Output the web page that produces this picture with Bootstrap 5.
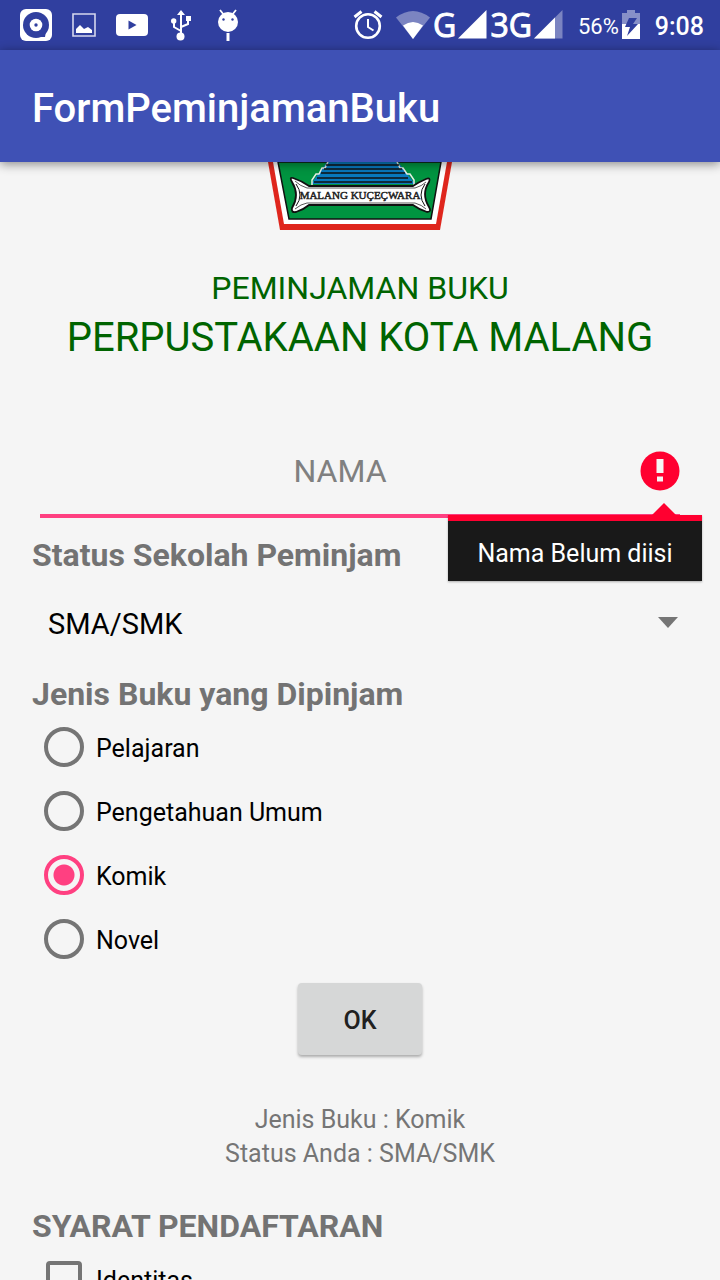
<!DOCTYPE html>
<html lang="id">
<head>
<meta charset="utf-8">
<meta name="viewport" content="width=device-width, initial-scale=1">
<title>FormPeminjamanBuku</title>
<link href="https://cdn.jsdelivr.net/npm/bootstrap@5.3.0/dist/css/bootstrap.min.css" rel="stylesheet">
<style>
  body { font-family: Roboto, "Noto Sans", sans-serif; font-size: 25px; line-height: 34px; background: #f5f5f5; color: #000; }
  .status-bar { height: 50px; background: #303f9f; color: #fff; }
  .status-bar svg { display: block; flex: none; }
  .app-bar { height: 112px; background: #3f51b5; box-shadow: 0 2px 10px rgba(0,0,0,.45); z-index: 2; }
  .app-title { font-size: 40px; line-height: 48px; font-weight: 500; color: #fff; padding-top: 6px; }
  .network { font: 32px/40px "Open Sans", "Noto Sans", sans-serif; padding-left: 2px; -webkit-text-stroke: 1px #fff; }
  .percent { font-size: 22px; margin-left: 14px; }
  .clock { font-weight: 500; }
  .green { color: #006400; margin-top: 36px; }
  .subtitle { font-size: 32px; line-height: 44px; }
  .headline { font-size: 40px; line-height: 56px; }
  .section-title { font-size: 32px; line-height: 41px; font-weight: 700; color: #737373; }
  .name-field { margin: 62px 8px 17px; }
  .name-input, .name-input:focus { height: 90px; padding: 0 40px 0 0; font-size: 32px; text-align: center; background: transparent; border: 0; border-bottom: 4px solid #ff4081; border-radius: 0; box-shadow: none; }
  .name-input::placeholder { color: #808080; }
  .error-icon { right: 0; top: 23px; }
  .error-tip { right: -22px; top: 87px; width: 254px; height: 66px; color: #fff; background: #191919; border-top: 6px solid #ff0030; box-shadow: 0 1px 2px rgba(0,0,0,.3); z-index: 1; }
  .error-tip span { padding-top: 6px; }
  .error-tip::before { content: ""; position: absolute; right: 26px; top: -18px; border: solid transparent; border-width: 0 12px 12px; border-bottom-color: #ff0030; }
  .spinner { height: 98px; }
  .spinner .form-select { height: 96px; padding: 0 48px 0 16px; font-size: 29px; line-height: 40px; color: #000; border: 0; background: transparent; box-shadow: none; }
  .spinner svg { right: 10px; top: 41px; pointer-events: none; }
  .choices { margin-top: -1px; }
  .choice { height: 64px; padding: 0 12px; margin: 0; gap: 12px; }
  .choice .form-check-input { float: none; flex: none; width: 40px; height: 40px; margin: 0; border: 4px solid #757575; background: transparent; box-shadow: none; }
  .choice .form-check-input:checked { border-color: #ff4081; background: radial-gradient(circle, #ff4081 10px, transparent 11px); }
  .choice .form-check-input[type=checkbox] { width: 36px; height: 36px; margin: 0 2px; border-radius: 4px; }
  .choice label { padding-top: 4px; }
  .ok-btn { width: 124px; height: 72px; margin: 12px 0 48px; padding: 4px 0 0; font-size: 25px; font-weight: 500; color: #202020; background: #d6d7d7; border: 0; border-radius: 4px; box-shadow: 0 2px 3px rgba(0,0,0,.3); }
  .result { color: #757575; margin-bottom: 35px; }
</style>
</head>
<body class="d-flex flex-column vh-100 overflow-hidden">

<header class="status-bar d-flex align-items-center justify-content-between flex-shrink-0 pe-3">
  <div class="d-flex align-items-center">
    <svg width="250" height="50" viewBox="0 0 250 50" fill="#fff" role="img" aria-label="Notifikasi">
      <rect x="20" y="9" width="32" height="32" rx="6"/>
      <circle cx="36" cy="25" r="13" fill="#303f9f"/>
      <path d="M39 37q4-1 7-6l-1 6z" fill="#303f9f"/>
      <circle cx="36" cy="25" r="6.300"/><circle cx="36" cy="25" r="1.700" fill="#303f9f"/>
      <path d="M73 14h22v22H73z" fill="none" stroke="#d5d8ee" stroke-width="1.600"/>
      <path d="M76 33v-4l4-4 4 4 4-2 4 3v3z"/>
      <rect x="116" y="14" width="32" height="22" rx="4"/>
      <path d="M128.500 20.500v9l8-4.500z" fill="#303f9f"/>
      <path d="M181 36V13M181 31l-7-4v-6M181 27l7-3v-5" fill="none" stroke="#fff" stroke-width="2"/>
      <path d="M177 15l4-5 4 5zM186 16h5v5h-5z"/><circle cx="173.700" cy="21" r="2.700"/><circle cx="180.500" cy="36.500" r="4"/>
      <path d="M220 10l4 5M236 10l-4 5" stroke="#fff" stroke-width="1.800"/>
      <circle cx="228" cy="22" r="10"/><path d="M226.500 33h3v8h-3z"/>
      <circle cx="223.500" cy="19.500" r="1.200" fill="#303f9f"/><circle cx="232.500" cy="19.500" r="1.200" fill="#303f9f"/>
    </svg>
  </div>
  <div class="d-flex align-items-center">
    <svg width="78" height="50" viewBox="0 0 78 50" fill="none" role="img" aria-label="Alarm dan Wi-Fi">
      <g stroke="#fff"><circle cx="15" cy="26" r="11.800" stroke-width="2.600"/><path d="M1.500 17l7-5.500M28.500 17l-7-5.500" stroke-width="3"/><path d="M15 19v8l5.500 3.500" stroke-width="2"/></g>
      <path d="M43 17.500Q60 4.500 77 17.500L60 39z" fill="#7b84c1"/><path d="M50 25.500q10-7 20 0L60 39z" fill="#fff"/>
    </svg>
    <span class="network">G</span>
    <svg width="32" height="50" viewBox="0 0 32 50" role="img" aria-label="Sinyal"><path d="M2 38.500L30.500 10v28.500z" fill="#fff"/></svg>
    <span class="network">3G</span>
    <svg width="32" height="50" viewBox="0 0 32 50" role="img" aria-label="Sinyal"><path d="M2 38.500L30.500 10v28.500z" fill="#7b84c1"/><path d="M2 38.500L23 17.500v21z" fill="#fff"/></svg>
    <span class="percent pt-1">56%</span>
    <svg width="24" height="50" viewBox="0 0 24 50" role="img" aria-label="Baterai"><path d="M3 13h5v-3h8v3h5v26H3z" fill="#8790c8"/><path d="M3 24h18v15H3z" fill="#fff"/><path d="M10 18h8l-4 6h5L8 36l3-9H6z" fill="#303f9f"/></svg>
    <span class="clock ms-2 ps-1 pt-1">9:08</span>
  </div>
</header>

<nav class="app-bar d-flex align-items-center flex-shrink-0 position-relative px-4">
  <h1 class="app-title m-0 ps-2">FormPeminjamanBuku</h1>
</nav>

<main class="flex-grow-1 overflow-hidden">
  <form class="px-4 mx-2" onsubmit="return false">
    <!-- City emblem, lower part in view -->
    <svg class="d-block mx-auto" width="190" height="68" viewBox="0 0 190 68" role="img" aria-label="Malang Kuçeçwara">
      <path d="M3 0h184l-12 68H15z" fill="#df261d"/>
      <path d="M8 0h174l-11 62H19z" fill="#fff"/>
      <path d="M13 0h163l-10 57H24z" fill="#009440" stroke="#111" stroke-width="1.500"/>
      <path d="M62 0L46 22h104L133 0z" fill="#0879bd"/>
      <path d="M63 0l-3 6h-3l-3 6h-3l-4 6v5M132 0l3 6h3l4 6h3l4 6v5" fill="none" stroke="#e6eee6" stroke-width="1.500"/>
      <path d="M61 3h73M59 7h78M56 11h84M52 16h91M49 20h98" stroke="#111" stroke-width="1.500"/>
      <path d="M28 16Q24 15 27 20Q35 33 27 46Q26 51 31 50Q38 48 44 43H148Q155 48 162 50Q167 50 164 45Q156 32 164 20Q166 15 161 17Q154 20 148 24H44Q37 19 28 16Z" fill="#fff" stroke="#111" stroke-width="1.800"/>
      <path d="M30 19Q35 24 42 26H150Q157 24 161 20M30 47Q36 42 42 41H150Q157 43 161 47" fill="none" stroke="#111" stroke-width="0.700"/>
      <path d="M31 22q8 11 0 22M160 22q-8 11 0 22" fill="none" stroke="#111" stroke-width="1"/>
      <text x="95" y="37" text-anchor="middle" font-family="Liberation Serif, serif" font-size="11" fill="#222" stroke="#222" stroke-width="0.500">MALANG KUÇEÇWARA</text>
    </svg>

    <div class="green text-center">
      <div class="subtitle">PEMINJAMAN BUKU</div>
      <div class="headline">PERPUSTAKAAN KOTA MALANG</div>
    </div>

    <div class="name-field position-relative">
      <input type="text" class="form-control name-input" id="nama" placeholder="NAMA" aria-label="Nama" aria-describedby="nama-error">
      <svg class="error-icon position-absolute" width="40" height="40" viewBox="0 0 40 40" aria-hidden="true"><circle cx="20" cy="20" r="19.500" fill="#ff0030"/><path d="M16.500 8h7v14h-7zM17 25.500h6v5h-6z" fill="#f5f5f5"/></svg>
      <div class="error-tip position-absolute d-flex align-items-center justify-content-center" id="nama-error" role="alert"><span>Nama Belum diisi</span></div>
    </div>

    <label class="section-title d-block" for="status">Status Sekolah Peminjam</label>
    <div class="spinner position-relative">
      <select class="form-select" id="status"><option selected>SMA/SMK</option></select>
      <svg class="position-absolute" width="20" height="11" viewBox="0 0 20 11" aria-hidden="true"><path d="M0 0h20L10 11z" fill="#757575"/></svg>
    </div>

    <fieldset>
      <legend class="section-title m-0">Jenis Buku yang Dipinjam</legend>
      <div class="choices">
        <div class="form-check choice d-flex align-items-center"><input class="form-check-input" type="radio" name="jenis" id="pelajaran"><label for="pelajaran">Pelajaran</label></div>
        <div class="form-check choice d-flex align-items-center"><input class="form-check-input" type="radio" name="jenis" id="umum"><label for="umum">Pengetahuan Umum</label></div>
        <div class="form-check choice d-flex align-items-center"><input class="form-check-input" type="radio" name="jenis" id="komik" checked><label for="komik">Komik</label></div>
        <div class="form-check choice d-flex align-items-center"><input class="form-check-input" type="radio" name="jenis" id="novel"><label for="novel">Novel</label></div>
      </div>
    </fieldset>

    <button type="submit" class="btn ok-btn d-block mx-auto">OK</button>

    <div class="result text-center">
      <div>Jenis Buku : Komik</div>
      <div>Status Anda : SMA/SMK</div>
    </div>

    <fieldset>
      <legend class="section-title m-0">SYARAT PENDAFTARAN</legend>
      <div class="choices">
        <div class="form-check choice d-flex align-items-center"><input class="form-check-input" type="checkbox" id="identitas"><label for="identitas">Identitas</label></div>
      </div>
    </fieldset>
  </form>
</main>

<script src="https://cdn.jsdelivr.net/npm/bootstrap@5.3.0/dist/js/bootstrap.bundle.min.js"></script>
</body>
</html>
